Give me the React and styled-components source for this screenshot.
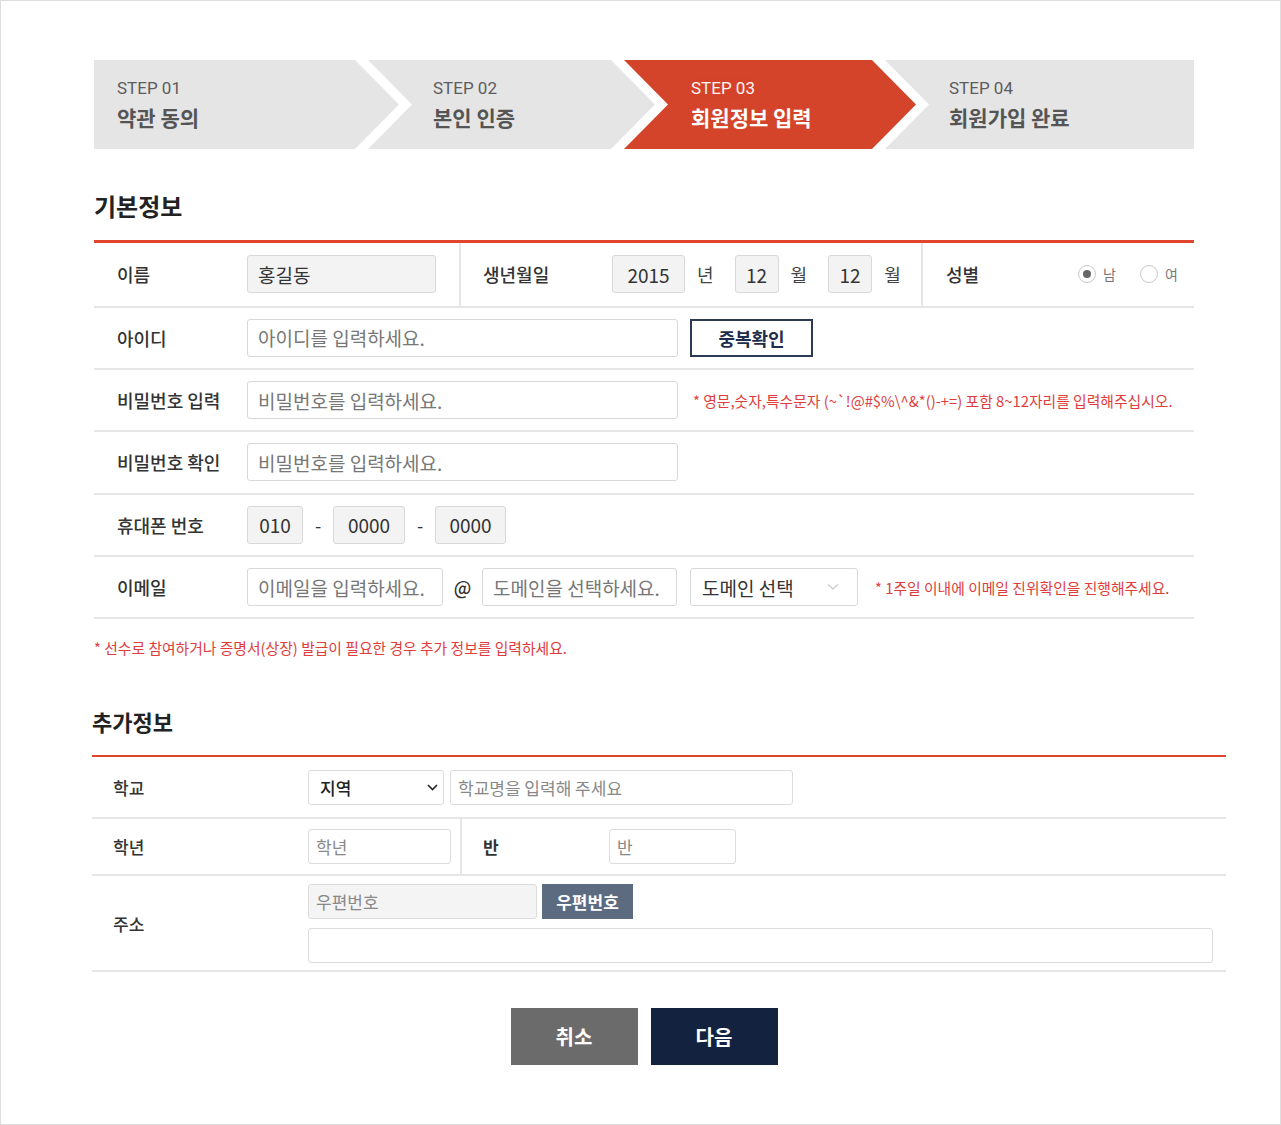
import React from "react";
import styled, { createGlobalStyle } from "styled-components";

const GlobalStyle = createGlobalStyle`
  body {
    margin: 0;
    background: #fff;
    font-family: "Noto Sans CJK KR", "Noto Sans", sans-serif;
    color: #333;
  }
  * { box-sizing: border-box; }
`;

const steps = [
  { no: "01", title: "약관 동의", width: 305, pad: 23 },
  { no: "02", title: "본인 인증", width: 287, pad: 65 },
  { no: "03", title: "회원정보 입력", width: 292, pad: 67, active: true },
  { no: "04", title: "회원가입 완료", width: 309, pad: 64 },
];

function clipFor(i, last) {
  const notch = i === 0 ? "" : ", 44px 50%";
  if (i === last) {
    return `polygon(0 0, 100% 0, 100% 100%, 0 100%${notch})`;
  }
  return `polygon(0 0, calc(100% - 44px) 0, 100% 50%, calc(100% - 44px) 100%, 0 100%${notch})`;
}

function App() {
  return (
    <Page>
      <GlobalStyle />
      <Wrap>
        <Stepper>
          {steps.map((s, i) => (
            <Step
              key={s.no}
              $w={s.width}
              $pad={s.pad}
              $active={s.active}
              $first={i === 0}
              style={{ clipPath: clipFor(i, steps.length - 1) }}
            >
              <StepNo>STEP {s.no}</StepNo>
              <StepTitle>{s.title}</StepTitle>
            </Step>
          ))}
        </Stepper>

        <SectionTitle>기본정보</SectionTitle>
        <Table>
          <Row $h={64.5}>
            <Cell $w={367} $divider>
              <Label>이름</Label>
              <Input $gray $w={189} defaultValue="홍길동" />
            </Cell>
            <Cell $w={462} $divider>
              <Label $w={151} $pad={22}>생년월일</Label>
              <Input $gray $w={73} $center defaultValue="2015" />
              <Unit>년</Unit>
              <Input $gray $w={44} $center defaultValue="12" />
              <Unit>월</Unit>
              <Input $gray $w={44} $center defaultValue="12" />
              <Unit $last>월</Unit>
            </Cell>
            <Cell $grow>
              <Label $w={155}>성별</Label>
              <Radios>
                <RadioItem>
                  <Radio $checked />남
                </RadioItem>
                <RadioItem>
                  <Radio />여
                </RadioItem>
              </Radios>
            </Cell>
          </Row>
          <Row>
            <Label>아이디</Label>
            <Input $w={431} placeholder="아이디를 입력하세요." />
            <OutlineButton>중복확인</OutlineButton>
          </Row>
          <Row>
            <Label>비밀번호 입력</Label>
            <Input $w={431} placeholder="비밀번호를 입력하세요." />
            <Note $ml={15}>
              * 영문,숫자,특수문자 (~`!@#$%\^&amp;*()-+=) 포함 8~12자리를 입력해주십시오.
            </Note>
          </Row>
          <Row>
            <Label>비밀번호 확인</Label>
            <Input $w={431} placeholder="비밀번호를 입력하세요." />
          </Row>
          <Row>
            <Label>휴대폰 번호</Label>
            <Input $gray $w={56} $center defaultValue="010" />
            <Dash>-</Dash>
            <Input $gray $w={72} $center defaultValue="0000" />
            <Dash>-</Dash>
            <Input $gray $w={71} $center defaultValue="0000" />
          </Row>
          <Row>
            <Label>이메일</Label>
            <Input $w={196} placeholder="이메일을 입력하세요." />
            <At>@</At>
            <Input $w={195} placeholder="도메인을 선택하세요." />
            <FakeSelect>
              도메인 선택
              <svg width="12" height="8" viewBox="0 0 12 8">
                <path d="M1 1.5 L6 6 L11 1.5" fill="none" stroke="#c8c8c8" strokeWidth="1.2" />
              </svg>
            </FakeSelect>
            <Note $ml={17}>* 1주일 이내에 이메일 진위확인을 진행해주세요.</Note>
          </Row>
        </Table>

        <Notice>* 선수로 참여하거나 증명서(상장) 발급이 필요한 경우 추가 정보를 입력하세요.</Notice>

        <Extra>
          <SubTitle>추가정보</SubTitle>
          <ExtraTable>
            <ExRow $h={62}>
              <ExLabel>학교</ExLabel>
              <RegionSelect>
                지역
                <svg width="11" height="7" viewBox="0 0 11 7">
                  <path d="M1 1 L5.5 5.5 L10 1" fill="none" stroke="#222" strokeWidth="1.6" />
                </svg>
              </RegionSelect>
              <SmallInput $w={343} $ml={6} placeholder="학교명을 입력해 주세요" />
            </ExRow>
            <ExRow $h={57}>
              <ExCell $w={370} $divider>
                <ExLabel>학년</ExLabel>
                <SmallInput $w={143} placeholder="학년" />
              </ExCell>
              <ExCell>
                <ExLabel $w={147} $bold>반</ExLabel>
                <SmallInput $w={127} placeholder="반" />
              </ExCell>
            </ExRow>
            <ExRow $h={96}>
              <ExLabel>주소</ExLabel>
              <AddressBox>
                <AddressLine>
                  <SmallInput $gray $w={229} placeholder="우편번호" />
                  <ZipButton>우편번호</ZipButton>
                </AddressLine>
                <SmallInput $w={905} />
              </AddressBox>
            </ExRow>
          </ExtraTable>
        </Extra>

        <Actions>
          <ActionButton $bg="#6b6b6b">취소</ActionButton>
          <ActionButton $bg="#13233f">다음</ActionButton>
        </Actions>
      </Wrap>
    </Page>
  );
}

export default App;

const Page = styled.div`
  width: 1281px;
  height: 1125px;
  border: 1px solid #dedede;
  overflow: hidden;
`;

const Wrap = styled.div`
  width: 1100px;
  margin-left: 93px;
  padding-top: 59px;
`;

const Stepper = styled.div`
  display: flex;
  height: 89px;
`;

const Step = styled.div`
  flex: none;
  width: ${(p) => p.$w}px;
  height: 100%;
  margin-left: ${(p) => (p.$first ? 0 : -31)}px;
  padding: 17px 0 0 ${(p) => p.$pad}px;
  background: ${(p) => (p.$active ? "#d4442a" : "#e5e5e5")};
  color: ${(p) => (p.$active ? "#fff" : "#555")};
`;

const StepNo = styled.div`
  font-family: Roboto, "Noto Sans CJK KR", sans-serif;
  font-size: 17px;
  line-height: 22px;
  opacity: 0.95;
`;

const StepTitle = styled.div`
  margin-top: 3px;
  font-size: 21px;
  line-height: 30px;
  font-weight: 700;
`;

const SectionTitle = styled.h2`
  margin: 41px 0 18px;
  font-size: 24px;
  line-height: 32px;
  font-weight: 700;
  color: #222;
`;

const Table = styled.div`
  border-top: 3px solid #e0452d;
`;

const Row = styled.div`
  display: flex;
  align-items: center;
  height: ${(p) => p.$h || 62.4}px;
  border-bottom: 2px solid #e6e6e6;
`;

const Cell = styled.div`
  display: flex;
  align-items: center;
  height: 100%;
  flex: ${(p) => (p.$grow ? "1" : "none")};
  width: ${(p) => (p.$w ? `${p.$w}px` : "auto")};
  border-right: ${(p) => (p.$divider ? "2px solid #e6e6e6" : "none")};
`;

const Label = styled.div`
  flex: none;
  width: ${(p) => p.$w || 153}px;
  padding-left: ${(p) => p.$pad || 23}px;
  font-size: 18px;
  font-weight: 500;
  color: #333;
`;

const Input = styled.input`
  flex: none;
  width: ${(p) => p.$w}px;
  height: 38px;
  padding: 0 ${(p) => (p.$center ? 0 : 10)}px;
  text-align: ${(p) => (p.$center ? "center" : "left")};
  border: 1px solid #d8d8d8;
  border-radius: 3px;
  background: ${(p) => (p.$gray ? "#f3f3f3" : "#fff")};
  font-family: "Noto Sans CJK KR", sans-serif;
  font-size: 19px;
  color: #333;
  outline: none;
  &::placeholder {
    color: #777;
  }
`;

const Unit = styled.span`
  margin: 0 ${(p) => (p.$last ? 0 : 21)}px 0 12px;
  font-size: 18px;
  color: #444;
`;

const Radios = styled.div`
  display: flex;
  gap: 24px;
`;

const RadioItem = styled.label`
  display: flex;
  align-items: center;
  gap: 7px;
  font-size: 14px;
  color: #777;
`;

const Radio = styled.span`
  width: 18px;
  height: 18px;
  border-radius: 50%;
  border: 1px solid #c9c9c9;
  background: #fff;
  display: flex;
  align-items: center;
  justify-content: center;
  &::after {
    content: "";
    width: 8px;
    height: 8px;
    border-radius: 50%;
    background: ${(p) => (p.$checked ? "#666" : "transparent")};
  }
`;

const OutlineButton = styled.button`
  margin-left: 12px;
  width: 123px;
  height: 38px;
  border: 2px solid #2b3a55;
  background: #fff;
  color: #1f2d4a;
  font-family: "Noto Sans CJK KR", sans-serif;
  font-size: 18px;
  font-weight: 700;
`;

const Note = styled.span`
  margin-left: ${(p) => p.$ml}px;
  font-size: 14.8px;
  color: #e03c3c;
  white-space: nowrap;
`;

const Dash = styled.span`
  width: 30px;
  text-align: center;
  font-size: 18px;
  color: #333;
`;

const At = styled.span`
  width: 39px;
  text-align: center;
  font-size: 18px;
  font-weight: 500;
  color: #333;
`;

const FakeSelect = styled.div`
  margin-left: 13px;
  width: 168px;
  height: 38px;
  display: flex;
  align-items: center;
  justify-content: space-between;
  padding: 0 18px 0 11px;
  border: 1px solid #d8d8d8;
  border-radius: 3px;
  font-size: 19px;
  color: #333;
`;

const Notice = styled.p`
  margin: 19px 0 0;
  font-size: 14.8px;
  line-height: 20px;
  color: #e03c3c;
`;

const Extra = styled.section`
  margin-left: -2px;
  width: 1134px;
`;

const SubTitle = styled.h3`
  margin: 48px 0 19px;
  font-size: 22px;
  line-height: 30px;
  font-weight: 700;
  color: #222;
`;

const ExtraTable = styled.div`
  border-top: 2px solid #e0452d;
`;

const ExRow = styled.div`
  display: flex;
  align-items: center;
  height: ${(p) => p.$h}px;
  border-bottom: 2px solid #e6e6e6;
`;

const ExCell = styled.div`
  display: flex;
  align-items: center;
  height: 100%;
  width: ${(p) => (p.$w ? `${p.$w}px` : "auto")};
  border-right: ${(p) => (p.$divider ? "2px solid #e6e6e6" : "none")};
`;

const ExLabel = styled.div`
  flex: none;
  width: ${(p) => p.$w || 216}px;
  padding-left: 21px;
  font-size: 17px;
  font-weight: ${(p) => (p.$bold ? 700 : 500)};
  color: #333;
`;

const SmallInput = styled.input`
  flex: none;
  width: ${(p) => p.$w}px;
  height: 35px;
  margin-left: ${(p) => p.$ml || 0}px;
  padding: 0 7px;
  border: 1px solid #dcdcdc;
  border-radius: 3px;
  background: ${(p) => (p.$gray ? "#f4f4f4" : "#fff")};
  font-family: "Noto Sans CJK KR", sans-serif;
  font-size: 17px;
  color: #333;
  outline: none;
  &::placeholder {
    color: #888;
  }
`;

const RegionSelect = styled.div`
  width: 136px;
  height: 35px;
  display: flex;
  align-items: center;
  justify-content: space-between;
  padding: 0 5px 0 11px;
  border: 1px solid #dcdcdc;
  border-radius: 3px;
  font-size: 17px;
  font-weight: 500;
  color: #222;
`;

const AddressBox = styled.div`
  display: flex;
  flex-direction: column;
  gap: 9px;
`;

const AddressLine = styled.div`
  display: flex;
  gap: 5px;
`;

const ZipButton = styled.button`
  width: 91px;
  height: 35px;
  border: none;
  background: #5d6b80;
  color: #fff;
  font-family: "Noto Sans CJK KR", sans-serif;
  font-size: 17px;
  font-weight: 700;
`;

const Actions = styled.div`
  display: flex;
  justify-content: center;
  gap: 13px;
  margin-top: 36px;
`;

const ActionButton = styled.button`
  width: 127px;
  height: 57px;
  border: none;
  background: ${(p) => p.$bg};
  color: #fff;
  font-family: "Noto Sans CJK KR", sans-serif;
  font-size: 20px;
  font-weight: 700;
`;
